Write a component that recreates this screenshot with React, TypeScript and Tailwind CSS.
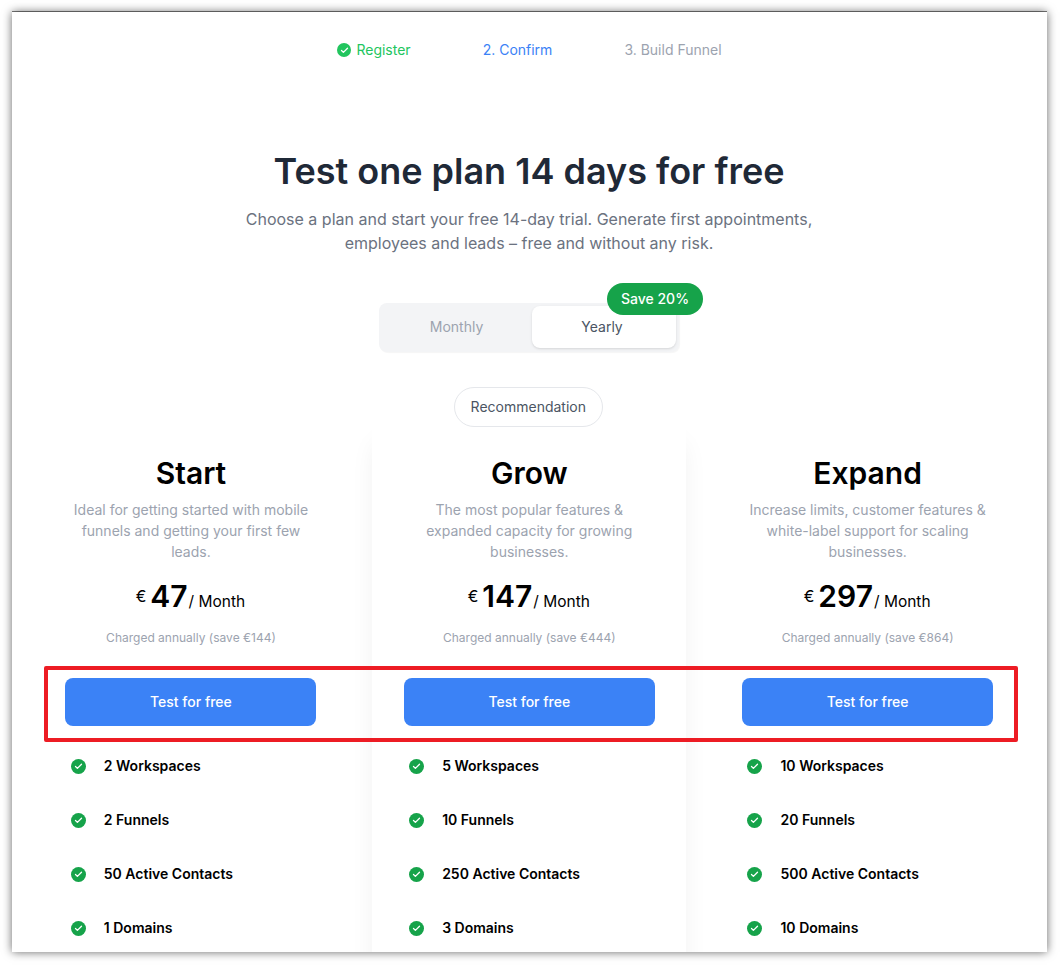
import { Check } from "lucide-react";

const plans = [
  {
    name: "Start",
    desc: "Ideal for getting started with mobile funnels and getting your first few leads.",
    price: 47,
    save: "€144",
    features: ["2 Workspaces", "2 Funnels", "50 Active Contacts", "1 Domains"],
    featured: false,
  },
  {
    name: "Grow",
    desc: "The most popular features & expanded capacity for growing businesses.",
    price: 147,
    save: "€444",
    features: ["5 Workspaces", "10 Funnels", "250 Active Contacts", "3 Domains"],
    featured: true,
  },
  {
    name: "Expand",
    desc: "Increase limits, customer features & white-label support for scaling businesses.",
    price: 297,
    save: "€864",
    features: ["10 Workspaces", "20 Funnels", "500 Active Contacts", "10 Domains"],
    featured: false,
  },
];

function CheckDot({ className }: { className: string }) {
  return (
    <span className={`flex shrink-0 items-center justify-center rounded-full ${className}`}>
      <Check className="h-[9px] w-[9px] text-white" strokeWidth={3.5} />
    </span>
  );
}

function PlanCard({ plan }: { plan: (typeof plans)[number] }) {
  return (
    <div
      className={`mx-3 mt-[33px] flex flex-col pt-[33px] pb-10 ${
        plan.featured ? "bg-white shadow-[0_20px_25px_-5px_rgba(0,0,0,0.08)]" : ""
      }`}
    >
      <h2 className="text-center text-[30px] leading-[40px] font-semibold text-black">{plan.name}</h2>
      <p className="mx-auto mt-[6px] w-[250px] text-center text-sm leading-[21px] text-[#9ca3af]">{plan.desc}</p>
      <div className="mt-[14px] flex items-start justify-center pr-px text-black">
        <span className="mt-[10px] mr-[4px] text-base leading-5">€</span>
        <span className="text-[30px] leading-[40px] font-semibold">{plan.price}</span>
        <span className="mt-[16px] ml-[1px] text-[15.5px] leading-5">/ Month</span>
      </div>
      <p className="mt-[14px] text-center text-xs leading-4 text-[#9ca3af]">Charged annually (save {plan.save})</p>
      <button className="mx-auto mt-[32px] h-12 w-[251px] rounded-lg bg-[#3b82f6] text-sm font-medium text-white">
        Test for free
      </button>
      <ul className="mt-[13px] flex flex-col pl-[37px]">
        {plan.features.map((f) => (
          <li key={f} className="flex h-[54px] items-center gap-[18px] text-sm font-semibold text-black">
            <CheckDot className="h-[15px] w-[15px] bg-[#16a34a]" />
            {f}
          </li>
        ))}
      </ul>
    </div>
  );
}

export default function App() {
  return (
    <div className="h-[965px] w-[1060px] bg-white pt-3 pl-3 font-['Inter',sans-serif]">
      <div className="relative h-[940px] w-[1035px] overflow-hidden bg-white shadow-[0_-1px_0_rgba(0,0,0,0.5),0_0_9px_rgba(0,0,0,0.6)]">
        <div className="flex w-[1034px] flex-col">
          <nav className="flex h-[76px] items-center justify-center gap-[72px] pl-px text-sm">
            <span className="flex items-center gap-[5px] text-[#22c55e]">
              <CheckDot className="h-[14px] w-[14px] bg-[#22c55e]" />
              Register
            </span>
            <span className="text-[#3b82f6]">2. Confirm</span>
            <span className="text-[#9ca3af]">3. Build Funnel</span>
          </nav>

          <h1 className="mt-[61px] text-center text-4xl leading-[44px] font-semibold text-[#1f2937]">
            Test one plan 14 days for free
          </h1>
          <p className="mt-[14px] text-center text-base leading-6 text-[#6b7280]">
            Choose a plan and start your free 14-day trial. Generate first appointments,
            <br />
            employees and leads – free and without any risk.
          </p>

          <div className="relative mx-auto mt-[48px] flex h-[49px] w-[300px] items-start rounded-lg bg-[#f3f4f6] p-[3px] shadow-[1px_1px_1px_rgba(0,0,0,0.04)]">
            <div className="mr-px flex h-[42px] w-[149px] items-center justify-center text-sm text-[#9ca3af]">
              Monthly
            </div>
            <div className="flex h-[42px] w-[144px] items-center justify-center rounded-lg bg-white pr-1 text-sm text-[#4b5563] shadow-sm">
              Yearly
            </div>
            <span className="absolute top-[-20px] right-[-24px] flex h-8 w-24 items-center justify-center rounded-full bg-[#16a34a] text-sm font-medium text-white">
              Save 20%
            </span>
          </div>

          <div className="relative mt-[35px] ml-[9.8px] grid w-[1015px] grid-cols-3">
            <span className="absolute top-0 left-[432px] z-10 flex h-10 w-[149px] items-center justify-center rounded-full border border-[#e5e7eb] bg-white text-sm text-[#4b5563]">
              Recommendation
            </span>
            {plans.map((plan) => (
              <PlanCard key={plan.name} plan={plan} />
            ))}
          </div>
        </div>

        <div className="absolute top-[654px] left-[32px] h-[76px] w-[974px] rounded-[2px] border-4 border-[#ed1c24]" />
      </div>
    </div>
  );
}
